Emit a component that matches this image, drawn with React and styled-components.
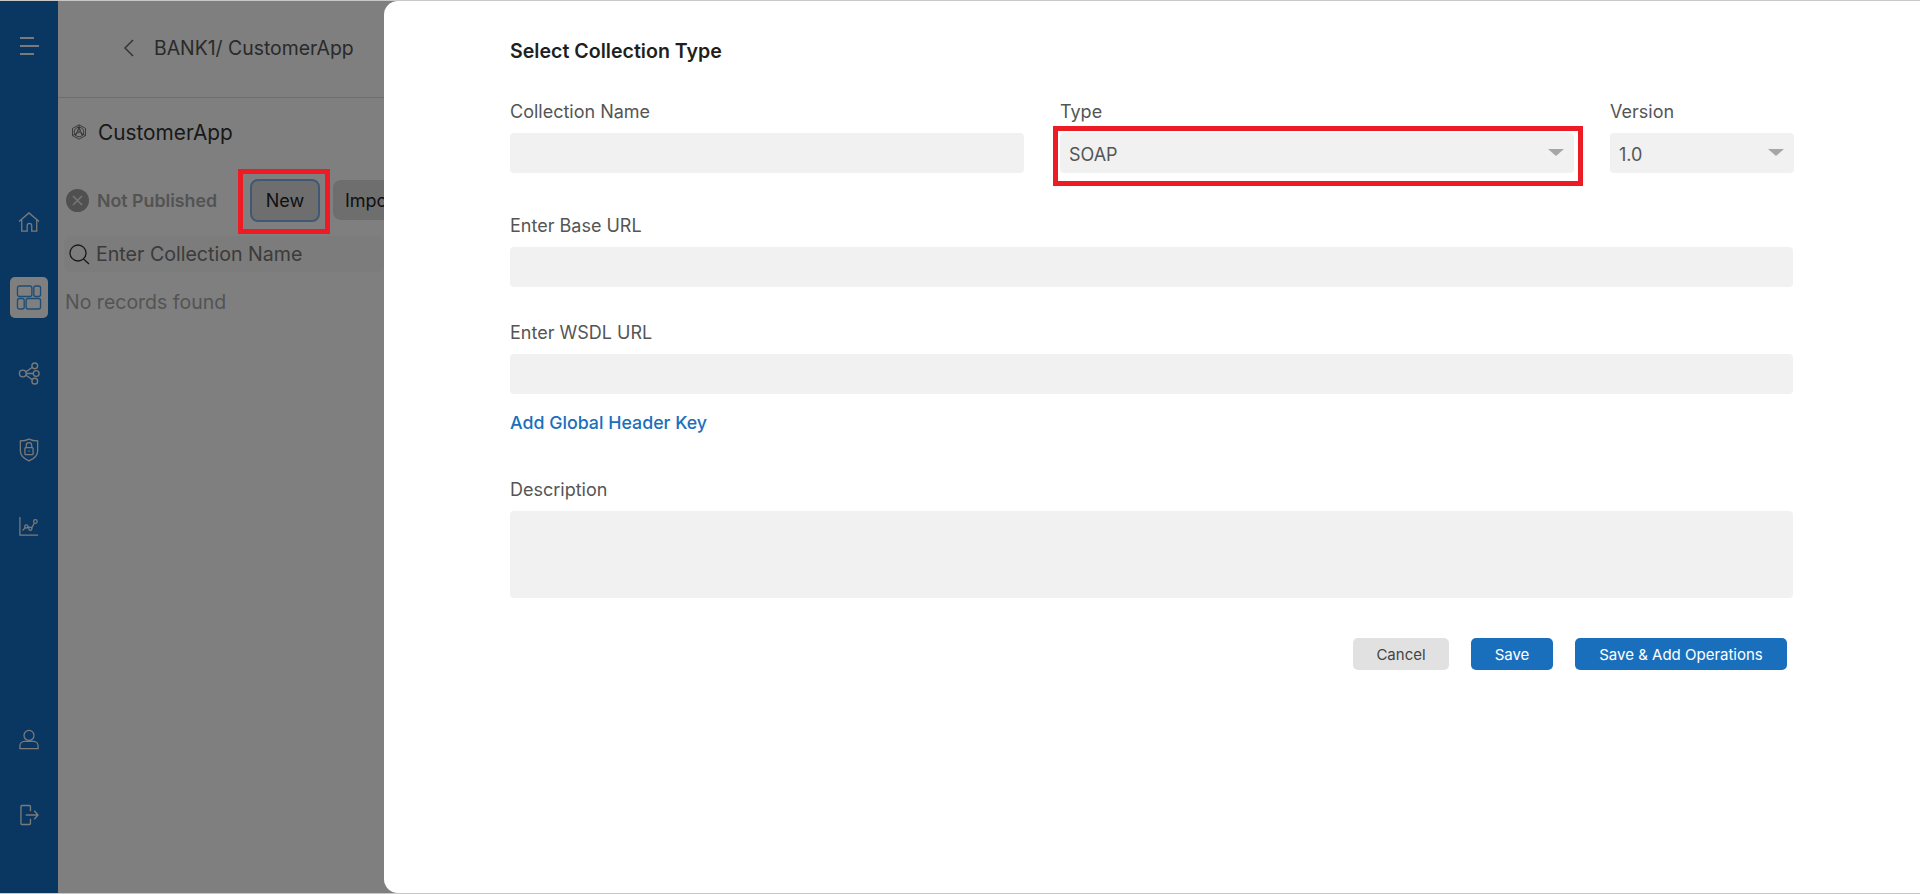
import React from "react";
import styled, { createGlobalStyle } from "styled-components";

const Global = createGlobalStyle`
  html, body {
    margin: 0;
    height: 100%;
    overflow: hidden;
    background: #fff;
  }
  * {
    box-sizing: border-box;
  }
  body {
    font-family: Inter, "Liberation Sans", sans-serif;
  }
`;

const Page = styled.div`
  position: relative;
  display: flex;
  width: 1920px;
  height: 894px;
  overflow: hidden;
  background: #fff;
`;

const Sidebar = styled.nav`
  width: 58px;
  flex-shrink: 0;
  display: flex;
  flex-direction: column;
  align-items: center;
  background: #156fc4;
  padding-top: 37px;
  color: #f5f5f5;
`;

const NavIcon = styled.div`
  width: 38px;
  height: 41px;
  display: flex;
  align-items: center;
  justify-content: center;
  border-radius: 5px;
  margin-top: ${(p) => p.$top || 0}px;
  color: ${(p) => (p.$active ? "#3a9be8" : "#f5f5f5")};
  background: ${(p) => (p.$active ? "#fff" : "transparent")};
`;

const Main = styled.div`
  flex: 1;
  display: flex;
  flex-direction: column;
`;

const Header = styled.header`
  height: 98px;
  display: flex;
  align-items: center;
  gap: 20px;
  padding: 0 0 2px 66px;
  border-bottom: 1px solid #ddd;
  font-size: 19.4px;
  color: #555;
`;

const Content = styled.div`
  padding: 0 0 0 6px;
  width: 326px;
`;

const AppTitle = styled.div`
  display: flex;
  align-items: center;
  gap: 11px;
  height: 68px;
  padding-left: 7px;
  font-size: 20.8px;
  color: #333;
`;

const ActionRow = styled.div`
  display: flex;
  align-items: center;
  height: 40px;
  margin-top: 14px;
  white-space: nowrap;
`;

const Status = styled.div`
  display: flex;
  align-items: center;
  gap: 8px;
  width: 186px;
  padding-left: 2px;
  flex-shrink: 0;
  font-size: 17.8px;
  font-weight: 600;
  color: #a6a6a6;
`;

const StatusDot = styled.span`
  width: 23px;
  height: 23px;
  border-radius: 50%;
  background: #a0a0a0;
  color: #eee;
  display: flex;
  align-items: center;
  justify-content: center;
`;

const NewButton = styled.button`
  width: 70px;
  height: 43px;
  flex-shrink: 0;
  border: 2px solid #7fb1e6;
  border-radius: 8px;
  background: #dcdcdc;
  font: 400 18px Inter, sans-serif;
  color: #222;
`;

const ImportButton = styled(NewButton)`
  width: 90px;
  height: 40px;
  margin-left: 13px;
  border: none;
  text-align: left;
  padding-left: 12px;
`;

const SearchBar = styled.div`
  display: flex;
  align-items: center;
  gap: 6px;
  height: 36px;
  margin-top: 16px;
  padding-left: 4px;
  background: #f8f8f8;
  border-radius: 6px;
  font-size: 19.6px;
  color: #777;
  white-space: nowrap;
`;

const NoRecords = styled.div`
  margin-top: 18px;
  padding-left: 1px;
  font-size: 19.5px;
  color: #a8a8a8;
`;

const Overlay = styled.div`
  position: absolute;
  inset: 1px 0 0 0;
  background: rgba(0, 0, 0, 0.5);
`;

const TopLine = styled.div`
  position: absolute;
  inset: 0 0 auto 0;
  height: 1px;
  background: #c8c8c8;
`;

const BottomLine = styled(TopLine)`
  inset: auto 0 0 0;
`;

const Modal = styled.section`
  position: absolute;
  top: 1px;
  left: 384px;
  right: 0;
  bottom: 1px;
  background: #fff;
  border-radius: 14px 0 0 14px;
  padding: 39px 127px 0 126px;
  color: #555;
`;

const ModalTitle = styled.h2`
  margin: 0;
  font-size: 19.6px;
  line-height: 23px;
  font-weight: 600;
  color: #1f1f1f;
`;

const FieldRow = styled.div`
  display: grid;
  grid-template-columns: 514px 514px 184px;
  column-gap: 36px;
  margin-top: 38px;
`;

const Field = styled.div`
  margin-top: ${(p) => p.$top || 0}px;
`;

const Label = styled.label`
  display: block;
  height: 22px;
  margin-bottom: 10px;
  font-size: 18px;
  line-height: 22px;
  color: #555;
`;

const Input = styled.div`
  height: ${(p) => p.$height || 40}px;
  background: #f1f1f1;
  border-radius: 4px;
`;

const Select = styled(Input)`
  display: flex;
  align-items: center;
  justify-content: space-between;
  padding: 2px 10px 0 9px;
  font-size: 18px;
  color: #555;
`;

const Caret = styled.span`
  width: 0;
  height: 0;
  margin-bottom: 3px;
  border-left: 8px solid transparent;
  border-right: 8px solid transparent;
  border-top: 7px solid #a6a6a6;
`;

const AddLink = styled.a`
  display: block;
  margin-top: 18px;
  font-size: 17.8px;
  line-height: 22px;
  font-weight: 500;
  color: #1a6fbd;
`;

const Actions = styled.div`
  display: flex;
  justify-content: flex-end;
  gap: 22px;
  margin-top: 40px;
  padding-right: 6px;
`;

const Button = styled.button`
  height: 32px;
  width: ${(p) => p.$width}px;
  border: none;
  border-radius: 5px;
  font: 400 15px Inter, sans-serif;
  color: ${(p) => (p.$primary ? "#fff" : "#444")};
  background: ${(p) => (p.$primary ? "#1a6fbd" : "#e1e1e1")};
`;

const RedBox = styled.div`
  position: absolute;
  top: ${(p) => p.$top}px;
  left: ${(p) => p.$left}px;
  width: ${(p) => p.$width}px;
  height: ${(p) => p.$height}px;
  border: 5px solid #ed1c24;
`;

const stroke = { fill: "none", stroke: "currentColor", strokeWidth: 1.4 };

const MenuIcon = () => (
  <svg width="20" height="18" viewBox="0 0 20 18" fill="none" stroke="currentColor" strokeWidth="2">
    <path d="M1 1h14M1 9h19M1 17h14" />
  </svg>
);

const HomeIcon = () => (
  <svg width="22" height="20" viewBox="0 0 24 22" {...stroke}>
    <path d="M1 10.500 12 1 23 10.500M4 8.500v12.500h6v-6a2.500 2.500 0 0 1 5 0v6h5.500V8.500" />
  </svg>
);

const GridIcon = () => (
  <svg width="26" height="25" viewBox="0 0 26 26" {...stroke}>
    <rect x="1" y="1" width="15" height="11" rx="2" />
    <rect x="18" y="1" width="7" height="11" rx="2" />
    <rect x="1" y="14" width="7" height="11" rx="2" />
    <rect x="10" y="14" width="15" height="11" rx="2" />
  </svg>
);

const ShareIcon = () => (
  <svg width="23" height="23" viewBox="0 0 24 24" {...stroke}>
    <circle cx="5" cy="12" r="3.500" />
    <circle cx="17.500" cy="4" r="3" />
    <circle cx="19" cy="12" r="3" />
    <circle cx="17.500" cy="20" r="3" />
    <path d="M8 10.500 15 5.500M8.500 12H16M8 13.500 15 18.500" />
  </svg>
);

const ShieldIcon = () => (
  <svg width="20" height="24" viewBox="0 0 22 26" {...stroke}>
    <path d="M1.500 3C5 3 8 2.500 11 1c3 1.500 6 2 9.500 2v11c0 5-5 9-9.500 11C6.500 23 1.500 19 1.500 14Z" />
    <rect x="6.500" y="10.500" width="9" height="7.500" rx="1" />
    <path d="M8 10.500V8a3 3 0 0 1 6 0v2.500M11 13.500v1.500" />
  </svg>
);

const ChartIcon = () => (
  <svg width="20" height="20" viewBox="0 0 22 22" {...stroke}>
    <path d="M1 1v20h20" />
    <path d="M4 16l3-3.500M9.500 11.500l1.800 1.500M13.800 13.500l3-5.500" />
    <circle cx="8" cy="11.500" r="1.700" />
    <circle cx="12.500" cy="14" r="1.700" />
    <circle cx="18" cy="6" r="2" />
  </svg>
);

const UserIcon = () => (
  <svg width="20" height="21" viewBox="0 0 22 22" {...stroke}>
    <circle cx="11" cy="6.500" r="5.500" />
    <path d="M1 21v-3a5 5 0 0 1 5-5h10a5 5 0 0 1 5 5v3Z" />
  </svg>
);

const LogoutIcon = () => (
  <svg width="19" height="22" viewBox="0 0 20 22" {...stroke}>
    <path d="M11 7V2a1 1 0 0 0-1-1H2a1 1 0 0 0-1 1v18a1 1 0 0 0 1 1h8a1 1 0 0 0 1-1v-5" />
    <path d="M6 11h13M15 6.500l4 4.500-4 4.500" />
  </svg>
);

const BackIcon = () => (
  <svg width="10" height="18" viewBox="0 0 10 18" fill="none" stroke="#666" strokeWidth="1.500">
    <path d="M9 1 1 9l8 8" />
  </svg>
);

const WheelIcon = () => (
  <svg width="16" height="16" viewBox="0 0 16 16" fill="none" stroke="#555" strokeWidth="0.8">
    <path d="M8 .8 14.500 4.400v7.200L8 15.200 1.500 11.600V4.400Z" />
    <circle cx="8" cy="8" r="4.800" />
    <path d="M8 1v7M1.500 11.600 8 8l6.500 3.600M4.500 12 8 3l3.500 9" />
  </svg>
);

const SearchIcon = () => (
  <svg width="22" height="22" viewBox="0 0 22 22" fill="none" stroke="#333" strokeWidth="1.300">
    <circle cx="10" cy="10" r="8" />
    <path d="M15.500 16 21 21" />
  </svg>
);

const CrossIcon = () => (
  <svg width="11" height="11" viewBox="0 0 11 11" fill="none" stroke="currentColor" strokeWidth="1.500">
    <path d="M1 1l9 9M10 1l-9 9" />
  </svg>
);

const App = () => {
  return (
    <Page>
      <Global />
      <Sidebar>
        <MenuIcon />
        <NavIcon $top={146}>
          <HomeIcon />
        </NavIcon>
        <NavIcon $top={35} $active>
          <GridIcon />
        </NavIcon>
        <NavIcon $top={35}>
          <ShareIcon />
        </NavIcon>
        <NavIcon $top={35}>
          <ShieldIcon />
        </NavIcon>
        <NavIcon $top={35}>
          <ChartIcon />
        </NavIcon>
        <NavIcon $top={173}>
          <UserIcon />
        </NavIcon>
        <NavIcon $top={34}>
          <LogoutIcon />
        </NavIcon>
      </Sidebar>
      <Main>
        <Header>
          <BackIcon />
          BANK1/ CustomerApp
        </Header>
        <Content>
          <AppTitle>
            <WheelIcon />
            CustomerApp
          </AppTitle>
          <ActionRow>
            <Status>
              <StatusDot>
                <CrossIcon />
              </StatusDot>
              Not Published
            </Status>
            <NewButton>New</NewButton>
            <ImportButton>Import</ImportButton>
          </ActionRow>
          <SearchBar>
            <SearchIcon />
            Enter Collection Name
          </SearchBar>
          <NoRecords>No records found</NoRecords>
        </Content>
      </Main>
      <TopLine />
      <Overlay />
      <BottomLine />
      <Modal>
        <ModalTitle>Select Collection Type</ModalTitle>
        <FieldRow>
          <div>
            <Label>Collection Name</Label>
            <Input />
          </div>
          <div>
            <Label>Type</Label>
            <Select>
              SOAP
              <Caret />
            </Select>
          </div>
          <div>
            <Label>Version</Label>
            <Select>
              1.0
              <Caret />
            </Select>
          </div>
        </FieldRow>
        <Field $top={42}>
          <Label>Enter Base URL</Label>
          <Input />
        </Field>
        <Field $top={35}>
          <Label>Enter WSDL URL</Label>
          <Input />
        </Field>
        <AddLink>Add Global Header Key</AddLink>
        <Field $top={45}>
          <Label>Description</Label>
          <Input $height={87} />
        </Field>
        <Actions>
          <Button $width={96}>Cancel</Button>
          <Button $primary $width={82}>
            Save
          </Button>
          <Button $primary $width={212}>
            Save &amp; Add Operations
          </Button>
        </Actions>
      </Modal>
      <RedBox $top={169} $left={238} $width={92} $height={65} />
      <RedBox $top={126} $left={1053} $width={530} $height={60} />
    </Page>
  );
};

export default App;
